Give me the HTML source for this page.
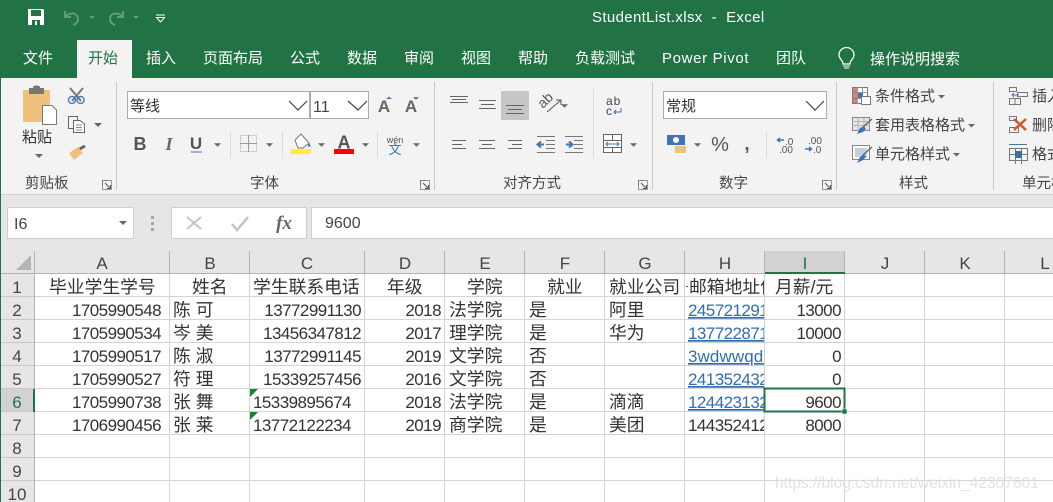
<!DOCTYPE html>
<html lang="zh"><head><meta charset="utf-8"><title>StudentList.xlsx - Excel</title>
<style>
html,body{margin:0;padding:0;background:#fff;width:1053px;height:502px;overflow:hidden}
svg{display:block;font-family:"Liberation Sans","Noto Sans CJK SC",sans-serif}
.tb{font-size:15px;fill:#fff}
.rb{font-size:15px;fill:#444}
.gl{font-size:14.5px;fill:#444}
.c{font-size:17px;letter-spacing:-.55px;fill:#333}
.z{font-size:17.8px;fill:#333}
.e{text-anchor:end}
.m{text-anchor:middle}
.h{font-size:17px;fill:#444;text-anchor:middle}
.l{font-size:17px;letter-spacing:-.55px;fill:#2f6eb5;text-decoration:underline}
</style></head><body>
<svg width="1053" height="502" viewBox="0 0 1053 502" xmlns="http://www.w3.org/2000/svg">
<defs>
<clipPath id="ch"><rect x="685" y="274" width="79" height="170"/></clipPath>
<symbol id="dd" viewBox="0 0 8 4"><path d="M0 0H8L4 4Z" fill="#666"/></symbol>
<g id="lau"><rect x="0" y="0" width="9" height="9" fill="none" stroke="#999"/><path d="M0 0H5M0 0V5" stroke="#777"/><path d="M2.5 2.5L8 8M8 4.500V8H4.500" stroke="#555" fill="none"/></g>
</defs>

<rect width="1053" height="78" fill="#217346"/>
<rect y="78" width="1053" height="116" fill="#f3f3f3"/>
<rect y="194" width="1053" height="80" fill="#e6e6e6"/>
<rect y="194" width="1053" height="1" fill="#d2d2d2"/>
<rect y="78" width="1" height="424" fill="#217346"/>

<!-- title bar -->
<path d="M28 9H43L44 10V25H28Z" fill="#fff"/>
<rect x="31" y="10" width="10" height="6" fill="#217346"/>
<rect x="32" y="20" width="8" height="5" fill="#217346"/><rect x="35" y="21" width="2" height="4" fill="#fff"/>
<path d="M65 11V17H71M65 17C69 12 78 12 78 19C78 22 76 24 73 25" fill="none" stroke="#5f9a7a" stroke-width="2"/>
<path d="M89 16H95L92 19Z" fill="#5f9a7a"/>
<path d="M123 11V17H117M123 17C119 12 110 12 110 19C110 22 112 24 115 25" fill="none" stroke="#5f9a7a" stroke-width="2"/>
<path d="M133 16H139L136 19Z" fill="#5f9a7a"/>
<path d="M156 15H165" stroke="#fff"/><path d="M156.500 17.500H164.500L160.500 22Z" fill="none" stroke="#fff"/>
<text x="592" y="22" font-size="15" fill="#fff" letter-spacing=".35" style="white-space:pre">StudentList.xlsx  -  Excel</text>

<!-- tabs -->
<rect x="77" y="40" width="55" height="38" fill="#f3f3f3"/>
<g class="tb">
<text x="23" y="63" class="tb">文件</text>
<text x="88" y="63" class="tb" style="fill:#217346">开始</text>
<text x="146" y="63" class="tb">插入</text>
<text x="203" y="63" class="tb">页面布局</text>
<text x="290" y="63" class="tb">公式</text>
<text x="347" y="63" class="tb">数据</text>
<text x="404" y="63" class="tb">审阅</text>
<text x="461" y="63" class="tb">视图</text>
<text x="518" y="63" class="tb">帮助</text>
<text x="575" y="63" class="tb">负载测试</text>
<text x="662" y="63" class="tb" letter-spacing=".65">Power Pivot</text>
<text x="776" y="63" class="tb">团队</text>
<text x="870" y="64" class="tb">操作说明搜索</text>
</g>
<path d="M843 64C843 60 839 59 839 55A7.500 7.500 0 0 1 854 55C854 59 850 60 850 64Z" fill="none" stroke="#fff" stroke-width="1.300"/>
<path d="M843 66H850M844 68H849" stroke="#fff"/>

<!-- group separators -->
<g stroke="#c6c6c6"><path d="M116.500 82V190M434.500 82V190M652.500 82V190M836.500 82V190M993.500 82V190"/>
<path d="M230.500 131V158M282.500 131V158M377.500 131V158M593.500 89V158M766.500 131V158" stroke="#dcdcdc"/></g>

<!-- clipboard -->
<rect x="23" y="90" width="27" height="32" rx="1" fill="#eec27d"/>
<path d="M29 88H33V87C33 85 40 85 40 87V88H44V94H29Z" fill="#777"/>
<path d="M42.500 105.500H52L56.500 110V124.500H42.500Z" fill="#fff" stroke="#777"/>
<text x="22" y="142" font-size="15" fill="#333">粘贴</text>
<use href="#dd" x="35" y="154" width="8" height="4"/>
<path d="M70 88L81 101M83 88L72 101" stroke="#777" stroke-width="2"/>
<circle cx="72" cy="100" r="3.500" fill="none" stroke="#4a7ebb" stroke-width="1.500"/><circle cx="80.500" cy="100" r="3.500" fill="none" stroke="#4a7ebb" stroke-width="1.500"/>
<path d="M68.500 116.500H77.500V128.500H68.500Z" fill="#f3f3f3" stroke="#666"/>
<path d="M73.500 120.500H80L84.500 124V132.500H73.500Z" fill="#fff" stroke="#666"/><path d="M76 125H82M76 127.500H82M76 130H82" stroke="#888"/>
<use href="#dd" x="94" y="123" width="8" height="4"/>
<path d="M78 150L85 146" stroke="#666" stroke-width="3"/><path d="M69 153L78 147L83 153L74 160Z" fill="#eec27d"/>
<text x="25" y="188" class="gl">剪贴板</text>
<use href="#lau" x="102.500" y="180.500"/>

<!-- font -->
<rect x="127.500" y="91.500" width="182" height="27" fill="#fff" stroke="#ababab"/>
<rect x="310.500" y="91.500" width="58" height="27" fill="#fff" stroke="#ababab"/>
<text x="130" y="111" font-size="15" fill="#333">等线</text>
<text x="313" y="112" font-size="16" fill="#444">11</text>
<path d="M289 101L298 110L307 101M348 101L358 110L367 101" fill="none" stroke="#444" stroke-width="1.200"/>
<text x="384" y="112" font-size="17" fill="#666" font-weight="bold" class="m">A</text><path d="M386 99L389 96.500L392 99Z" fill="#4a7ebb"/>
<text x="411" y="112" font-size="17" fill="#666" font-weight="bold" class="m">A</text><path d="M413 97H419L416 100Z" fill="#4a7ebb"/>
<text x="140" y="150" font-size="18" font-weight="bold" fill="#555" class="m">B</text>
<text x="169" y="150" font-size="18" font-weight="bold" font-style="italic" fill="#666" font-family="Liberation Serif" class="m">I</text>
<text x="196" y="149" font-size="17" font-weight="bold" fill="#555" class="m">U</text><path d="M191 152H202" stroke="#4a6fa0"/>
<use href="#dd" x="214" y="143" width="7" height="4"/>
<rect x="240.500" y="135.500" width="16" height="16" fill="none" stroke="#aaa" stroke-dasharray="1 1"/>
<path d="M240 143.500H257M248.500 135V152" stroke="#999"/>
<use href="#dd" x="266" y="143" width="7" height="4"/>
<path d="M295 140L301 134L309 143L303 148H298Z" fill="#fff" stroke="#777"/><path d="M308 142L311 146L308 147Z" fill="#4a7ebb"/>
<rect x="291" y="149" width="20" height="5" fill="#ffee33"/>
<use href="#dd" x="318" y="143" width="7" height="4"/>
<text x="344" y="148.500" font-size="18" font-weight="bold" fill="#555" class="m">A</text>
<rect x="334" y="149" width="20" height="5" fill="#f00"/>
<use href="#dd" x="362" y="143" width="7" height="4"/>
<text x="395" y="143" font-size="9" fill="#555" class="m">wén</text>
<text x="395" y="154" font-size="13" fill="#3f74b5" class="m">文</text>
<use href="#dd" x="413" y="143" width="7" height="4"/>
<text x="250" y="188" class="gl">字体</text>
<use href="#lau" x="420.500" y="180.500"/>

<!-- alignment -->
<rect x="501" y="91" width="28" height="29" fill="#c6c6c6"/>
<g stroke="#666"><path d="M450 96.500H468M452 99.500H466M450 102.500H468"/>
<path d="M479 100.500H496M481 104.500H494M479 108.500H496"/>
<path d="M506 105.500H524M508 109.500H522M506 113.500H524"/>
<path d="M452 140.500H466M452 144.500H462M452 148.500H466M479 140.500H495M482 144.500H492M479 148.500H495M508 140.500H522M512 144.500H522M508 148.500H522"/>
<path d="M537 136.500H555M546 140.500H555M546 144.500H555M546 148.500H555M537 152.500H555M565 136.500H583M574 140.500H583M574 144.500H583M574 148.500H583M565 152.500H583" stroke="#777"/></g>
<path d="M544 144.500H538M541 141.500L537.500 144.500L541 147.500" stroke="#3f74b5" stroke-width="2" fill="none"/>
<path d="M566 144.500H572M569 141.500L572.500 144.500L569 147.500" stroke="#3f74b5" stroke-width="2" fill="none"/>
<text transform="translate(543,109) rotate(-45)" font-size="14" fill="#555">ab</text>
<path d="M547 112L561 100M556 100H561V105" stroke="#555" fill="none"/>
<use href="#dd" x="561" y="104" width="7" height="4"/>
<text x="606" y="105" font-size="12" fill="#444" letter-spacing="1">ab</text><text x="606" y="115" font-size="12" fill="#444">c</text>
<path d="M621 108V112H614M616 110L614 112L616 114" stroke="#3f74b5" fill="none"/>
<rect x="603.500" y="134.500" width="18" height="18" fill="#fff" stroke="#666"/>
<path d="M603 140.500H622M603 147.500H622M612.500 134V140M612.500 148V153" stroke="#666"/>
<path d="M606 144H619M608 142L606 144L608 146M617 142L619 144L617 146" stroke="#3f74b5" fill="none"/>
<use href="#dd" x="630" y="143" width="7" height="4"/>
<text x="503" y="188" class="gl">对齐方式</text>
<use href="#lau" x="638.500" y="180.500"/>

<!-- number -->
<rect x="663.500" y="91.500" width="163" height="27" fill="#fff" stroke="#ababab"/>
<text x="666" y="111" font-size="15" fill="#333">常规</text>
<path d="M806 101L815 110L824 101" fill="none" stroke="#444" stroke-width="1.200"/>
<rect x="667" y="135" width="18" height="10" fill="#3f74b5"/><circle cx="676" cy="140" r="3" fill="#fff"/>
<path d="M675 146H686V153H675Z" fill="#eec27d"/>
<use href="#dd" x="694" y="143" width="7" height="4"/>
<text x="720" y="151" font-size="20" fill="#555" class="m">%</text>
<text x="747" y="150" font-size="19" font-weight="bold" fill="#555" class="m">,</text>
<text x="785" y="145" font-size="10" fill="#555">.0</text><text x="779" y="153" font-size="10" fill="#555">.00</text>
<path d="M784 140H778M780 138L777.500 140L780 142" stroke="#3f74b5" stroke-width="1.500" fill="none"/>
<text x="808" y="144" font-size="10" fill="#555">.00</text><text x="813" y="153" font-size="10" fill="#555">.0</text>
<path d="M805 149H811M809 147L811.500 149L809 151" stroke="#3f74b5" stroke-width="1.500" fill="none"/>
<text x="719" y="188" class="gl">数字</text>
<use href="#lau" x="822.500" y="180.500"/>

<!-- styles -->
<rect x="852.500" y="87.500" width="15" height="16" fill="#fff" stroke="#777"/>
<path d="M852 92.500H868M852 98.500H868M857.500 87V104M862.500 87V104" stroke="#999"/>
<rect x="853" y="88" width="4" height="15" fill="#c0504d" opacity=".7"/><rect x="858" y="93" width="5" height="5" fill="#3f74b5"/>
<rect x="861.500" y="96.500" width="9" height="8" fill="#fff" stroke="#777"/>
<text x="875" y="101" class="rb">条件格式</text><use href="#dd" x="938" y="95" width="7" height="3.500"/>
<rect x="852.500" y="117.500" width="17" height="13" fill="#e4e4e4" stroke="#888"/>
<path d="M852 121.500H870M852 125.500H870M858 118V131M864 118V131" stroke="#b4b4b4"/>
<path d="M863 127L872 119" stroke="#666" stroke-width="1.500"/><path d="M857 134L860 128L864 126L866 129L863 132Z" fill="#3f74b5"/>
<text x="875" y="130" class="rb">套用表格格式</text><use href="#dd" x="968" y="124" width="7" height="3.500"/>
<rect x="852.500" y="145.500" width="17" height="14" fill="#fff" stroke="#888"/><rect x="855" y="148" width="12" height="9" fill="#c5cfdf"/>
<path d="M863 155L872 147" stroke="#666" stroke-width="1.500"/><path d="M857 163L860 157L864 154L866 157L863 160Z" fill="#3f74b5"/>
<text x="875" y="159" class="rb">单元格样式</text><use href="#dd" x="953" y="153" width="7" height="3.500"/>
<text x="899" y="188" class="gl">样式</text>

<!-- cells -->
<g fill="none" stroke="#777">
<path d="M1009.500 87.500H1016.500V91.500H1009.500ZM1009.500 98.500H1020.500V104.500H1009.500ZM1015 98V105M1017.500 92.500H1027.500V96.500H1017.500Z"/>
<path d="M1009.500 116.500H1016.500V120.500H1009.500ZM1009.500 127.500H1018.500V132.500H1009.500Z"/>
<path d="M1009.500 148.500H1027.500V160.500H1009.500ZM1009.500 154.500H1027.500M1015.500 148V164M1021.500 148V164"/></g>
<path d="M1012 95H1019M1014 93L1012 95L1014 97" stroke="#3f74b5" fill="none"/>
<path d="M1014 119L1026 130M1026 119L1014 130" stroke="#d2552e" stroke-width="2.500"/>
<rect x="1015" y="151" width="7" height="7" fill="#3f6ea8"/>
<path d="M1009 144.500H1027" stroke="#3f74b5"/>
<text x="1032" y="101" class="rb">插入</text>
<text x="1032" y="130" class="rb">删除</text>
<text x="1032" y="159" class="rb">格式</text>
<text x="1022" y="188" class="gl">单元格</text>

<!-- formula bar -->
<rect x="7.500" y="207.500" width="126" height="31" fill="#fff" stroke="#d0d0d0"/>
<text x="14" y="229" font-size="16" fill="#444">I6</text>
<use href="#dd" x="119" y="221" width="8" height="4"/>
<g fill="#a8a8a8"><rect x="151" y="216" width="3" height="3"/><rect x="151" y="222" width="3" height="3"/><rect x="151" y="228" width="3" height="3"/></g>
<rect x="171.500" y="207.500" width="135" height="31" fill="#fff" stroke="#d0d0d0"/>
<rect x="311.500" y="207.500" width="742" height="31" fill="#fff" stroke="#d0d0d0"/>
<path d="M187 217L201 229M201 217L187 229" stroke="#c4c4c4" stroke-width="2"/>
<path d="M232 224L237 230L248 217" stroke="#c4c4c4" stroke-width="2.500" fill="none"/>
<text x="284" y="229" font-size="19" font-family="Liberation Serif" font-style="italic" font-weight="bold" fill="#666" class="m">fx</text>
<text x="325" y="228" font-size="16" fill="#444">9600</text>

<!-- grid -->
<rect x="1" y="251" width="1052" height="23" fill="#e6e6e6"/>
<rect x="1" y="273" width="34" height="229" fill="#e6e6e6"/>
<rect x="35" y="274" width="1018" height="228" fill="#fff"/>
<rect x="765" y="251" width="79" height="22" fill="#d2d2d2"/>
<rect x="1" y="389" width="33" height="22" fill="#d2d2d2"/>
<path d="M16 270H31V255Z" fill="#b4b4b4"/>
<g stroke="#d4d4d4">
<path d="M35 296.500H1053M35 319.500H1053M35 342.500H1053M35 365.500H1053M35 388.500H1053M35 411.500H1053M35 434.500H1053M35 457.500H1053M35 480.500H1053"/>
<path d="M169.500 274V502M249.500 274V502M364.500 274V502M444.500 274V502M524.500 274V502M604.500 274V502M684.500 274V502M764.500 274V502M844.500 274V502M924.500 274V502M1004.500 274V502"/>
</g>
<g stroke="#b4b4b4">
<path d="M1 273.500H1053M34.500 251V502"/>
<path d="M169.500 251V273M249.500 251V273M364.500 251V273M444.500 251V273M524.500 251V273M604.500 251V273M684.500 251V273M764.500 251V273M844.500 251V273M924.500 251V273M1004.500 251V273"/>
<path d="M1 296.500H34M1 319.500H34M1 342.500H34M1 365.500H34M1 388.500H34M1 411.500H34M1 434.500H34M1 457.500H34M1 480.500H34" stroke="#c8c8c8"/>
</g>
<rect x="765" y="272" width="80" height="2" fill="#217346"/>
<rect x="33" y="389" width="2" height="23" fill="#217346"/>

<!-- headers -->
<text x="102" y="269" class="h">A</text><text x="210" y="269" class="h">B</text><text x="307" y="269" class="h">C</text><text x="405" y="269" class="h">D</text><text x="485" y="269" class="h">E</text><text x="565" y="269" class="h">F</text><text x="645" y="269" class="h">G</text><text x="725" y="269" class="h">H</text><text x="805" y="269" class="h" style="fill:#217346">I</text><text x="885" y="269" class="h">J</text><text x="965" y="269" class="h">K</text><text x="1045" y="269" class="h">L</text>
<text x="17" y="293" class="h">1</text><text x="17" y="316" class="h">2</text><text x="17" y="339" class="h">3</text><text x="17" y="362" class="h">4</text><text x="17" y="385" class="h">5</text><text x="17" y="408" class="h" style="fill:#217346">6</text><text x="17" y="431" class="h">7</text><text x="17" y="454" class="h">8</text><text x="17" y="477" class="h">9</text><text x="17" y="500" class="h">10</text>

<!-- row 1 -->
<text x="49" y="293" class="z">毕业学生学号</text><text x="192" y="293" class="z">姓名</text><text x="253" y="293" class="z">学生联系电话</text><text x="387" y="293" class="z">年级</text><text x="467" y="293" class="z">学院</text><text x="547" y="293" class="z">就业</text><text x="609" y="293" class="z">就业公司</text>
<text x="775" y="293" class="z">月薪/元</text>
<g clip-path="url(#ch)"><text x="689" y="293" class="z">邮箱地址信</text></g>
<path d="M686 286.500H688" stroke="#555"/>

<g class="cells">
<text x="161" y="316" class="c e">1705990548</text><text x="161" y="339" class="c e">1705990534</text><text x="161" y="362" class="c e">1705990517</text><text x="161" y="385" class="c e">1705990527</text><text x="161" y="408" class="c e">1705990738</text><text x="161" y="431" class="c e">1706990456</text>
<text x="173" y="316" class="z">陈 可</text><text x="173" y="339" class="z">岑 美</text><text x="173" y="362" class="z">陈 淑</text><text x="173" y="385" class="z">符 理</text><text x="173" y="408" class="z">张 舞</text><text x="173" y="431" class="z">张 莱</text>
<text x="361" y="316" class="c e">13772991130</text><text x="361" y="339" class="c e">13456347812</text><text x="361" y="362" class="c e">13772991145</text><text x="361" y="385" class="c e">15339257456</text><text x="253" y="408" class="c">15339895674</text><text x="253" y="431" class="c">13772122234</text>
<text x="441" y="316" class="c e">2018</text><text x="441" y="339" class="c e">2017</text><text x="441" y="362" class="c e">2019</text><text x="441" y="385" class="c e">2016</text><text x="441" y="408" class="c e">2018</text><text x="441" y="431" class="c e">2019</text>
<text x="449" y="316" class="z">法学院</text><text x="449" y="339" class="z">理学院</text><text x="449" y="362" class="z">文学院</text><text x="449" y="385" class="z">文学院</text><text x="449" y="408" class="z">法学院</text><text x="449" y="431" class="z">商学院</text>
<text x="529" y="316" class="z">是</text><text x="529" y="339" class="z">是</text><text x="529" y="362" class="z">否</text><text x="529" y="385" class="z">否</text><text x="529" y="408" class="z">是</text><text x="529" y="431" class="z">是</text>
<text x="609" y="316" class="z">阿里</text><text x="609" y="339" class="z">华为</text><text x="609" y="408" class="z">滴滴</text><text x="609" y="431" class="z">美团</text>
<g clip-path="url(#ch)">
<text x="688" y="316" class="l">2457212912</text><text x="688" y="339" class="l">1377228712</text><text x="688" y="362" class="l" style="letter-spacing:.1px">3wdwwqd12</text><text x="688" y="385" class="l">2413524321</text><text x="688" y="408" class="l">1244231321</text><text x="688" y="431" class="l" style="fill:#333;text-decoration:none">1443524121</text>
</g>
<text x="841" y="316" class="c e">13000</text><text x="841" y="339" class="c e">10000</text><text x="841" y="362" class="c e">0</text><text x="841" y="385" class="c e">0</text><text x="841" y="408" class="c e">9600</text><text x="841" y="431" class="c e">8000</text>
</g>
<path d="M250 388V396L258 388ZM250 411V419L258 411Z" fill="#17852f" transform="translate(0,1)"/>

<!-- selection -->
<rect x="764.500" y="388.500" width="80" height="23" fill="none" stroke="#217346" stroke-width="2"/>
<rect x="842" y="409" width="5" height="5" fill="#217346" stroke="#fff" stroke-width=".5"/>

<!-- watermark -->
<text x="775" y="488" font-size="15.500" fill="#e2e2e2">https://blog.csdn.net/weixin_42307601</text>
</svg>
</body></html>
